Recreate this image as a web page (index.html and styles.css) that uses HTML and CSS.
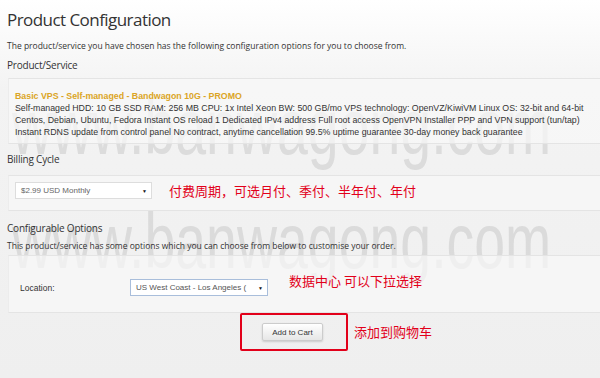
FILE: index.html
```html
<!DOCTYPE html>
<html lang="zh-cn">
<head>
    <meta charset="UTF-8">
    <meta name="viewport" content="width=device-width, initial-scale=1.0">
    <title>Product Configuration</title>
    <link rel="stylesheet" href="styles.css">
</head>
<body>
    <div class="page">
        <h1>Product Configuration</h1>
        <p class="intro">The product/service you have chosen has the following configuration options for you to choose from.</p>

        <h2>Product/Service</h2>
        <div class="panel product">
            <div class="pname">Basic VPS - Self-managed - Bandwagon 10G - PROMO</div>
            <div class="pdesc">Self-managed HDD: 10 GB SSD RAM: 256 MB CPU: 1x Intel Xeon BW: 500 GB/mo VPS technology: OpenVZ/KiwiVM Linux OS: 32-bit and 64-bit Centos, Debian, Ubuntu, Fedora Instant OS reload 1 Dedicated IPv4 address Full root access OpenVPN Installer PPP and VPN support (tun/tap) Instant RDNS update from control panel No contract, anytime cancellation 99.5% uptime guarantee 30-day money back guarantee</div>
        </div>

        <h2 class="billing-title">Billing Cycle</h2>
        <div class="panel billing">
            <div class="select cycle"><span>$2.99 USD Monthly</span><i>&#9660;</i></div>
            <span class="note">付费周期，可选月付、季付、半年付、年付</span>
        </div>

        <h2 class="options-title">Configurable Options</h2>
        <p class="intro options-intro">This product/service has some options which you can choose from below to customise your order.</p>
        <div class="panel options">
            <label class="field">Location:</label>
            <div class="select loc"><span>US West Coast - Los Angeles (</span><i>&#9660;</i></div>
            <span class="note">数据中心 可以下拉选择</span>
        </div>

        <div class="cart">
            <div class="mark">
                <button type="button">Add to Cart</button>
            </div>
            <span class="note">添加到购物车</span>
        </div>
    </div>

    <div class="watermark">
        <div>www.banwagong.com</div>
        <div>www.banwagong.com</div>
    </div>
</body>
</html>
```

FILE: styles.css
```css
html, body { margin: 0; height: 100%; }
body { background: linear-gradient(#fff 0, #f3f3f3 90px, #efefef 378px); color: #333; font-family: "Open Sans", Arial, sans-serif; overflow: hidden; }
.page { padding: 9px 0 0 7px; width: 640px; position: relative; z-index: 1; }
h1 { font-size: 17px; font-weight: normal; line-height: 22px; margin: 0; letter-spacing: -0.55px; color: #333; }
.intro { font-size: 8.5px; line-height: 12px; margin: 9px 0 0; color: #333; }
h2 { font-size: 10px; font-weight: normal; line-height: 14px; margin: 6px 0 0; letter-spacing: -0.2px; color: #333; }
.panel { margin-left: 1px; background: rgba(248, 248, 248, 0.7); border-top: 1px solid #e4e4e4; border-left: 1px solid #ececec; border-bottom: 1px solid #e4e4e4; }
.product { margin-top: 6px; padding: 11px 6px 5px; font-family: "Liberation Sans", Arial, sans-serif; font-size: 8.8px; line-height: 12px; }
.pname { color: #dba526; font-weight: bold; }
.pdesc { color: #333; width: 574px; }
.billing-title { margin-top: 8px; }
.billing { margin-top: 9px; padding: 5px 6px 10px; display: flex; align-items: center; }
.options-title { margin-top: 10px; }
.options-intro { margin-top: 5px; }
.options { margin-top: 3px; padding: 23px 11px 16px; display: flex; align-items: center; }
.select { display: flex; align-items: center; justify-content: space-between; background: #fff; border: 1px solid #ddd; height: 15px; padding: 0 4px 0 5px; font-family: "Liberation Sans", Arial, sans-serif; font-size: 8px; color: #666; box-sizing: content-box; }
.select i { font-style: normal; font-size: 5px; color: #111; }
.cycle { width: 126px; }
.loc { width: 127px; border-color: #a9bedb; color: #555; }
.field { width: 110px; font-family: "Liberation Sans", Arial, sans-serif; font-size: 8.5px; color: #333; }
.note { color: #e2001a; font-size: 13px; font-family: "Noto Sans CJK SC", sans-serif; margin-left: 17px; }
.options .note { margin-left: 21px; margin-top: -15px; }
.cart { display: flex; align-items: flex-start; padding-left: 233px; }
.mark { width: 104px; height: 34px; border: 2px solid #e2001a; border-radius: 2px; display: flex; justify-content: center; align-items: center; }
.mark button { font-family: "Liberation Sans", Arial, sans-serif; font-size: 8px; color: #333; height: 18px; padding: 0 9px; margin-left: -3px; background: linear-gradient(#fff, #e6e6e6); border: 1px solid #ccc; border-radius: 2px; box-shadow: 0 1px 2px rgba(0, 0, 0, 0.15); }
.cart .note { margin-left: 6px; margin-top: 9px; }
.watermark { position: absolute; left: 12px; top: 70px; z-index: 0; pointer-events: none; font-family: "Liberation Sans", Arial, sans-serif; font-size: 77px; line-height: 114px; color: rgba(140, 140, 140, 0.22); transform: scaleX(0.72); transform-origin: left top; white-space: nowrap; }
```
